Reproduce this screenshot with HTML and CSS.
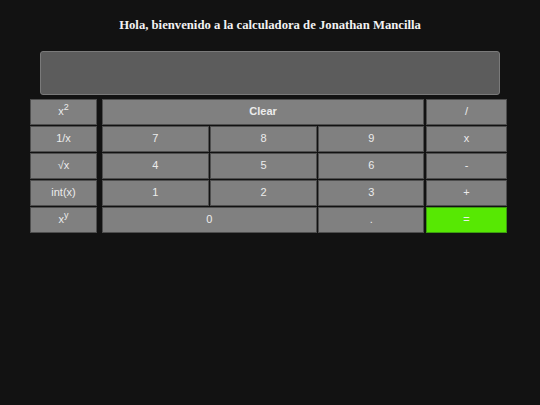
FILE: index.html
```html
<!DOCTYPE html>
<html lang="es">
<head>
<meta charset="utf-8">
<title>Calculadora</title>
<link rel="stylesheet" href="styles.css">
</head>
<body>
<h1 class="title">Hola, bienvenido a la calculadora de Jonathan Mancilla</h1>
<div class="display"></div>
<div class="pad">
  <div class="side">
    <button class="btn">x<sup>2</sup></button>
    <button class="btn">1/x</button>
    <button class="btn">√x</button>
    <button class="btn">int(x)</button>
    <button class="btn">x<sup>y</sup></button>
  </div>
  <div class="main">
    <button class="btn clear">Clear</button>
    <button class="btn">/</button>
    <button class="btn">7</button>
    <button class="btn">8</button>
    <button class="btn">9</button>
    <button class="btn">x</button>
    <button class="btn">4</button>
    <button class="btn">5</button>
    <button class="btn">6</button>
    <button class="btn">-</button>
    <button class="btn">1</button>
    <button class="btn">2</button>
    <button class="btn">3</button>
    <button class="btn">+</button>
    <button class="btn zero">0</button>
    <button class="btn">.</button>
    <button class="btn equals">=</button>
  </div>
</div>
</body>
</html>
```

FILE: styles.css
```css
html, body {
  margin: 0;
  padding: 0;
  background: #121212;
}
body {
  width: 540px;
  height: 405px;
  overflow: hidden;
}
.title {
  margin: 0;
  padding-top: 16px;
  height: 36px;
  box-sizing: border-box;
  text-align: center;
  font-family: "Liberation Serif", serif;
  font-weight: bold;
  font-size: 12.7px;
  line-height: 18px;
  color: #f2f2f2;
}
.display {
  margin: 15px 0 0 40px;
  width: 460px;
  height: 44px;
  box-sizing: border-box;
  background: #5c5c5c;
  border: 1px solid #7a7a7a;
  border-radius: 3px;
}
.pad {
  display: flex;
  gap: 5px;
  margin: 4.3px 0 0 30px;
}
.side {
  display: grid;
  grid-template-columns: 67px;
  grid-auto-rows: 25.4px;
  row-gap: 1.6px;
}
.main {
  display: grid;
  grid-template-columns: 106.7px 106.6px 105.9px 81.8px;
  grid-auto-rows: 25.4px;
  column-gap: 1.5px;
  row-gap: 1.6px;
}
.btn {
  margin: 0;
  padding: 0;
  background: #808080;
  border: 1px solid #4e4e4e;
  color: #ececec;
  font-family: "Liberation Sans", Arial, sans-serif;
  font-size: 11px;
  line-height: 1;
  text-align: center;
}
.btn sup {
  font-size: 9px;
  vertical-align: 5px;
  line-height: 0;
}
.clear {
  grid-column: span 3;
  font-weight: bold;
}
.zero {
  grid-column: span 2;
}
.equals {
  background: #57e803;
  border-color: #3d9c10;
}
```
